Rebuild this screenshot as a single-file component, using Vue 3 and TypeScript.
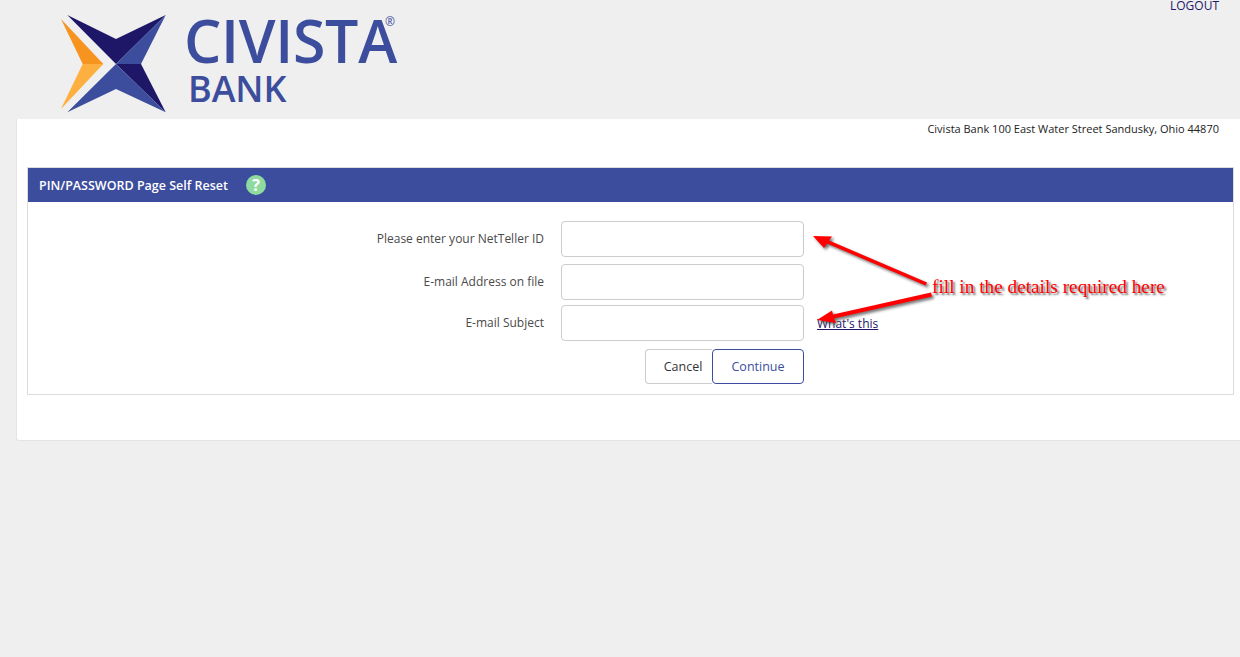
<script setup lang="ts">
const fields = [
  { label: 'Please enter your NetTeller ID', cls: 'first' },
  { label: 'E-mail Address on file', cls: 'second' },
  { label: 'E-mail Subject', cls: 'third' },
];
</script>

<template>
  <div class="page">
    <header class="top">
      <div class="brand">
        <svg class="mark" width="110" height="100" viewBox="60 14 110 100">
          <polygon points="67.3,15 116,39 165.7,15 116,64" fill="#1e1768" />
          <polygon points="165.7,15 141,64 116,64" fill="#3c4d9d" />
          <polygon points="116,64 141,64 165.7,112.3" fill="#1e1768" />
          <polygon points="67.3,112.3 116,64 165.7,112.3 116,89" fill="#3c4d9d" />
          <polygon points="61,19 103.3,64 82.7,64" fill="#f79420" />
          <polygon points="61,109 82.7,64 103.3,64" fill="#fdb040" />
        </svg>
        <div class="wordmark">
          <div class="civista">CIVISTA<sup>®</sup></div>
          <div class="bank">BANK</div>
        </div>
      </div>
      <a class="logout">LOGOUT</a>
    </header>

    <main class="card">
      <p class="address">Civista Bank 100 East Water Street Sandusky, Ohio 44870</p>
      <section class="panel">
        <div class="panel-head">
          <span>PIN/PASSWORD Page Self Reset</span>
          <span class="help">?</span>
        </div>
        <div class="panel-body">
          <div v-for="f in fields" :key="f.label" class="row" :class="f.cls">
            <label>{{ f.label }}</label>
            <input type="text" />
            <a v-if="f.cls === 'third'" class="whats">What's this</a>
          </div>
          <div class="actions">
            <button class="cancel">Cancel</button>
            <button class="continue">Continue</button>
          </div>
        </div>
      </section>
    </main>

    <svg class="arrows" width="1240" height="657" viewBox="0 0 1240 657">
      <polygon points="813,236 832,236.5 829,240.5 927,282.5 925.5,285.5 827,243.5 824,248" fill="#ff0000" />
      <polygon points="817,320 832,310.5 833,314.5 931,292.5 932,296.5 834,318.5 836,323" fill="#ff0000" />
    </svg>
    <div class="note">fill in the details required here</div>
  </div>
</template>

<style>
html, body {
  margin: 0;
  background: #efefef;
}
</style>

<style scoped>
.page {
  position: relative;
  width: 1240px;
  height: 657px;
  overflow: hidden;
  background: #efefef;
  font-family: "Open Sans", "Liberation Sans", sans-serif;
  font-size: 12px;
  color: #333;
}
.top {
  height: 119px;
  box-sizing: border-box;
  display: flex;
  justify-content: space-between;
  padding: 0 21px 0 60px;
}
.brand {
  display: flex;
  align-items: flex-start;
  padding-top: 14px;
}
.mark {
  flex: none;
}
.wordmark {
  margin-left: 14px;
  color: #3c4d9d;
}
.civista {
  position: relative;
  margin-top: -2px;
  font-size: 59px;
  font-weight: 600;
  line-height: 56px;
  letter-spacing: -0.3px;
  white-space: nowrap;
}
.civista sup {
  position: absolute;
  left: 201px;
  top: 0;
  font-size: 12px;
  font-weight: 400;
  line-height: 20px;
  letter-spacing: 0;
}
.bank {
  font-size: 36px;
  font-weight: 600;
  line-height: 36px;
  margin: 3px 0 0 4px;
  letter-spacing: -0.1px;
}
.logout {
  color: #1e1768;
  font-size: 12px;
  line-height: 12px;
  height: 12px;
}
.card {
  height: 322px;
  box-sizing: border-box;
  margin-left: 16px;
  padding: 0 6px 0 10px;
  background: #fff;
  border: 1px solid #e4e4e4;
  border-top: 0;
  border-right: 0;
  border-radius: 0 0 0 3px;
}
.address {
  margin: 0;
  height: 48px;
  padding: 2px 15px 0 0;
  box-sizing: border-box;
  text-align: right;
  font-size: 11px;
  line-height: 15px;
  color: #222;
}
.panel {
  height: 228px;
  box-sizing: border-box;
  border: 1px solid #dcdcdc;
}
.panel-head {
  height: 34px;
  display: flex;
  align-items: center;
  gap: 18px;
  padding-left: 11px;
  background: #3c4d9d;
  color: #fff;
  font-size: 12.5px;
  font-weight: 600;
}
.help {
  width: 20px;
  height: 20px;
  border-radius: 50%;
  background: #8fdb9f;
  color: #fff;
  font-size: 16px;
  font-weight: 700;
  line-height: 20px;
  text-align: center;
}
.row {
  display: grid;
  grid-template-columns: 516px 243px auto;
  column-gap: 17px;
  align-items: center;
  height: 36px;
  position: relative;
}
.row.first {
  margin-top: 19px;
}
.row.second {
  margin-top: 7px;
}
.row.third {
  margin-top: 5px;
}
.row label {
  text-align: right;
  color: #4a4a4a;
  font-size: 12px;
  margin-top: -2px;
}
.row input {
  width: 243px;
  height: 36px;
  box-sizing: border-box;
  border: 1px solid #ccc;
  border-radius: 4px;
  background: #fff;
  outline: none;
}
.whats {
  margin-left: -4px;
  margin-top: 1px;
  font-size: 12px;
  color: #1e1768;
  text-decoration: underline;
}
.actions {
  display: flex;
  margin: 8px 0 0 617px;
}
.actions button {
  height: 35px;
  box-sizing: border-box;
  background: #fff;
  font-family: inherit;
  font-size: 12.5px;
  padding: 0;
}
.cancel {
  width: 67px;
  border: 1px solid #ccc;
  border-right: 0;
  border-radius: 4px 0 0 4px;
  color: #333;
  padding-left: 8px !important;
}
.continue {
  width: 92px;
  border: 1px solid #3c4d9d;
  border-radius: 4px;
  color: #3c4d9d;
}
.arrows {
  position: absolute;
  left: 0;
  top: 0;
  pointer-events: none;
  filter: drop-shadow(2px 2px 1.5px rgba(60, 60, 60, 0.75));
}
.note {
  position: absolute;
  left: 932px;
  top: 276px;
  font-family: "Liberation Serif", serif;
  font-size: 19.3px;
  line-height: 22px;
  color: #ff0000;
  white-space: nowrap;
  text-shadow: 2px 2px 2px rgba(60, 60, 60, 0.75);
}
</style>
